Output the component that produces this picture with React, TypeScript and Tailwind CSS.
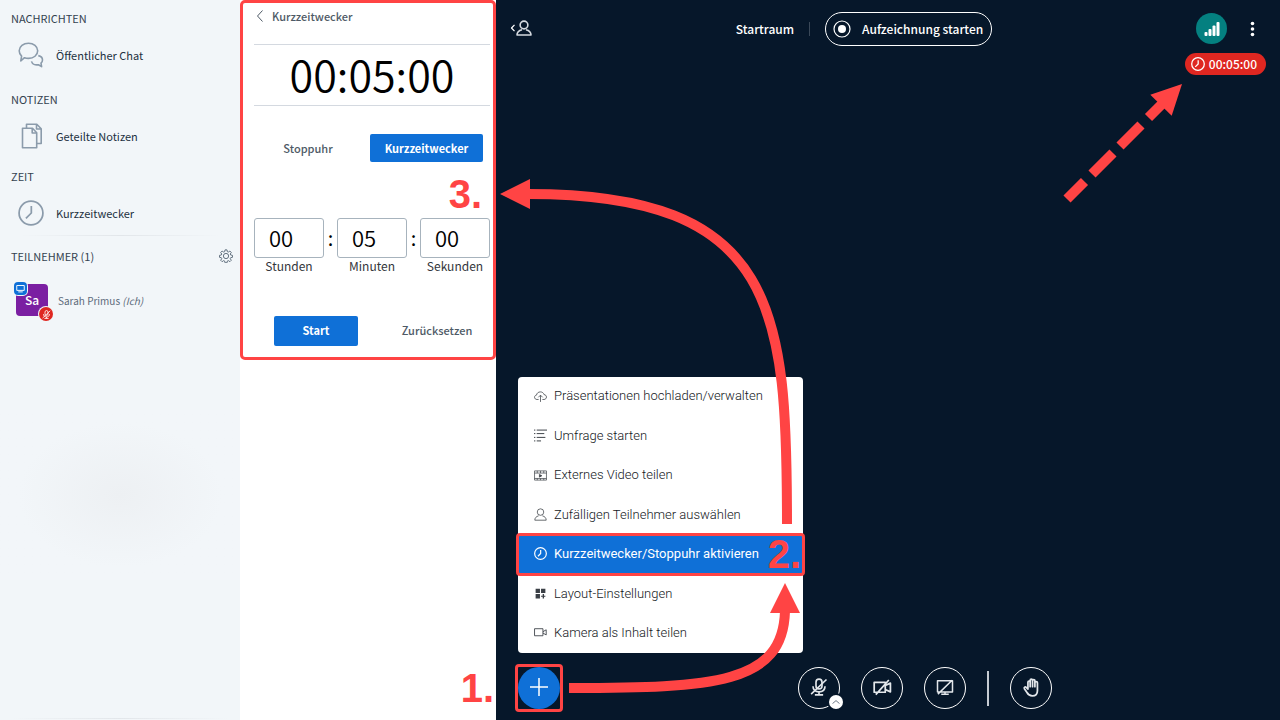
import React, { useState } from "react";

type IconProps = { className?: string };

const ui = "font-['Noto_Sans_CJK_SC','Open_Sans',sans-serif]";

function Svg({
  className,
  children,
  box = "0 0 24 24",
  stroke = "1.6",
}: IconProps & { children: React.ReactNode; box?: string; stroke?: string }) {
  return (
    <svg
      viewBox={box}
      className={className}
      fill="none"
      stroke="currentColor"
      strokeWidth={stroke}
      strokeLinejoin="round"
      aria-hidden="true"
    >
      {children}
    </svg>
  );
}

const ChatIcon = ({ className }: IconProps) => (
  <Svg className={className} box="0 0 26 26">
    <path d="M10.500 1.200c5 0 9.200 3.200 9.200 7.600s-4.100 7.600-9.200 7.600c-1.500 0-2.800-.2-4-.7L2.800 19l.8-4.800C2.100 12.800 1.200 11 1.200 8.800c0-4.400 4.200-7.600 9.300-7.600Z" />
    <path d="M20.300 13.600c2.600.6 4.200 2.300 4.200 4.300 0 1.300-.6 2.400-1.500 3.200l.6 3.500-3.200-1.900c-3.200.6-6.200-.6-6.900-3.300" />
  </Svg>
);

const NotesIcon = ({ className }: IconProps) => (
  <Svg className={className} box="0 0 22 26">
    <path d="M1.500 5.200h10l4.200 4.500v15H1.500Z" />
    <path d="M11.200 5.500v4.500h4.300" />
    <path d="M5.500 5V1.200h10.300l4.400 4.500v14.800h-4.500M15.500 1.500V6h4.500" />
  </Svg>
);

const ClockIcon = ({ className }: IconProps) => (
  <Svg className={className}>
    <circle cx="12" cy="12" r="11" />
    <path d="M12.300 5.500v6.500l-5 5" />
  </Svg>
);

const BoldClockIcon = ({ className }: IconProps) => (
  <Svg className={className} stroke="2.2">
    <circle cx="12" cy="12" r="10.800" />
    <path d="M12.300 5.500v6.500l-5 5" />
  </Svg>
);

const GearIcon = ({ className }: IconProps) => (
  <Svg className={className}>
    <circle cx="12" cy="12" r="4.500" />
    <path d="M10.300 1.500h3.400l.6 3.100 1.700.7 2.700-1.800 2.400 2.400-1.800 2.700.7 1.700 3.100.6v3.400l-3.100.6-.7 1.700 1.800 2.700-2.400 2.400-2.700-1.800-1.700.7-.6 3.100h-3.400l-.6-3.100-1.700-.7-2.700 1.800-2.400-2.400 1.800-2.700-.7-1.700-3.100-.6v-3.400l3.100-.6.7-1.700-1.800-2.700 2.400-2.400L8 5.300l1.700-.7Z" />
  </Svg>
);

const UserIcon = ({ className }: IconProps) => (
  <Svg className={className} stroke="1.4">
    <circle cx="12" cy="7.500" r="6" />
    <path d="M8.500 14.500C4 15.500 1.500 18.500 1.500 22.500h21c0-4-2.500-7-7-8" />
  </Svg>
);

const BoldUserIcon = ({ className }: IconProps) => (
  <Svg className={className} stroke="2.4">
    <circle cx="12" cy="7.500" r="5.800" />
    <path d="M9 14.500c-4.500 1-7.500 3.500-7.500 8h21c0-4.500-3-7-7.500-8" />
  </Svg>
);

const CloudIcon = ({ className }: IconProps) => (
  <Svg className={className} stroke="1.4">
    <path d="M8.500 17.500h-3C3 17.500 1 15.800 1 13.400c0-2.200 1.600-3.800 3.700-4C5 6 8 3.500 11.700 3.500c3.500 0 6 2 6.800 5 2.600.2 4.500 2 4.500 4.500s-2 4.500-4.500 4.500h-3" />
    <path d="M12 22V10M8 13.500l4-4 4 4" />
  </Svg>
);

const PollIcon = ({ className }: IconProps) => (
  <Svg className={className} stroke="1.8">
    <path d="M0 2h2.500M5 2h19M0 8.500h2.500M5 8.500h14M0 15.500h2.500M5 15.500h16M0 22h2.500M5 22h8" />
  </Svg>
);

const FilmIcon = ({ className }: IconProps) => (
  <Svg className={className} stroke="1.3">
    <path d="M1 3.500h22v17H1ZM1 7.500h22M1 17.500h22M6 3.500v4M12 3.500v4M18 3.500v4M6 17.500v3M12 17.500v3M18 17.500v3" />
    <path d="M10 10v5l4.500-2.500Z" fill="currentColor" />
  </Svg>
);

const LayoutIcon = ({ className }: IconProps) => (
  <svg viewBox="0 0 24 24" className={className} fill="currentColor" aria-hidden="true">
    <path d="M3 3h8v8H3ZM13 3h8v8h-8ZM3 13h8v8H3ZM16 13h2.500v3H21v2h-2.500v3H16v-3h-3v-2h3Z" />
  </svg>
);

const CameraIcon = ({ className }: IconProps) => (
  <Svg className={className}>
    <path d="M1 5h15.500v13H1ZM16.500 10.500l6-3.500v9.500l-6-3.500" />
  </Svg>
);

const MicOffIcon = ({ className }: IconProps) => (
  <Svg className={className} stroke="2.2">
    <rect x="8" y="1.500" width="8" height="13" rx="4" />
    <path d="M4 11c0 4.500 3 7.500 8 7.500s8-3 8-7.500M12 18.500V22M6.500 22.500h11M1.500 21.500 22 2" />
  </Svg>
);

const CamOffIcon = ({ className }: IconProps) => (
  <Svg className={className} stroke="2.2">
    <path d="M1.500 5.500h14v12.500h-14ZM15.500 9.500l6.500-3v11l-6.500-3M3.500 21 20 2.500" />
  </Svg>
);

const ScreenOffIcon = ({ className }: IconProps) => (
  <Svg className={className} stroke="2">
    <path d="M2 3.500h20v15H2ZM7 21.500h10M12 18.500v3M2.500 21.500 21.500 3" />
  </Svg>
);

const HandIcon = ({ className }: IconProps) => (
  <Svg className={className} stroke="2.2">
    <path
      strokeLinecap="round"
      d="M7.500 14V5.500c0-2 2.800-2 2.800 0v5.500M10.300 11V3c0-2 3-2 3 0v8M13.300 11V3.500c0-2 3-2 3 0V11M16.300 11V6c0-2 3.200-2 3.200 0v10c0 4.300-2.500 6.500-6.500 6.500-3.500 0-5.200-1.500-6.700-4.200L3 13.500c-.8-1.800 1-2.800 2.300-1.600L7.500 14"
    />
  </Svg>
);

const ScreenIcon = ({ className }: IconProps) => (
  <Svg className={className} stroke="2.5">
    <path d="M2 4h20v13H2ZM6 21h12" />
  </Svg>
);

const menuItems = [
  { label: "Präsentationen hochladen/verwalten", Icon: CloudIcon },
  { label: "Umfrage starten", Icon: PollIcon },
  { label: "Externes Video teilen", Icon: FilmIcon },
  { label: "Zufälligen Teilnehmer auswählen", Icon: UserIcon },
  { label: "Kurzzeitwecker/Stoppuhr aktivieren", Icon: BoldClockIcon, active: true },
  { label: "Layout-Einstellungen", Icon: LayoutIcon },
  { label: "Kamera als Inhalt teilen", Icon: CameraIcon },
];

function Step({ children, className }: { children: string; className: string }) {
  return (
    <span
      className={`pointer-events-none absolute font-['Liberation_Sans',sans-serif] text-[40px] leading-10 font-bold text-[#ff4444] ${className}`}
    >
      {children}
    </span>
  );
}

function NavGroup({ title, children }: { title: string; children: React.ReactNode }) {
  return (
    <section>
      <h2 className="pb-[9px] pl-[11px] text-[11px] leading-4 text-[#344250]">{title}</h2>
      {children}
    </section>
  );
}

function NavItem({ label, Icon, iconClass }: { label: string; Icon: React.FC<IconProps>; iconClass: string }) {
  return (
    <button type="button" className="flex h-10 w-full items-center pl-[18px] text-left text-[11px] text-[#22313f]">
      <span className="flex w-[38px]">
        <Icon className={`text-[#8b9bab] ${iconClass}`} />
      </span>
      {label}
    </button>
  );
}

function Sidebar() {
  return (
    <nav className="flex w-60 shrink-0 flex-col bg-[#f2f6f9] pt-[10px]">
      <div className="flex flex-col gap-3">
        <NavGroup title="NACHRICHTEN">
          <NavItem label="Öffentlicher Chat" Icon={ChatIcon} iconClass="size-[26px]" />
        </NavGroup>
        <div className="pt-1">
          <NavGroup title="NOTIZEN">
            <NavItem label="Geteilte Notizen" Icon={NotesIcon} iconClass="ml-[3px] h-[26px] w-[22px]" />
          </NavGroup>
        </div>
        <NavGroup title="ZEIT">
          <NavItem label="Kurzzeitwecker" Icon={ClockIcon} iconClass="size-[26px]" />
        </NavGroup>
      </div>
      <div className="mx-5 mt-[2px] h-px bg-linear-to-r from-transparent via-[#e2e6ea] to-transparent" />
      <section className="pt-3">
        <div className="flex items-center justify-between pr-[7px] pl-[11px]">
          <h2 className="text-[11px] leading-4 text-[#344250]">TEILNEHMER (1)</h2>
          <button type="button" aria-label="Teilnehmer verwalten" className="text-[#5a6978]">
            <GearIcon className="size-[14px]" />
          </button>
        </div>
        <div className="flex items-center gap-[10px] pt-5 pl-4">
          <div className="relative flex size-8 items-center justify-center rounded-[4px] bg-[#7b1fa2] text-[12px] font-medium text-white">
            Sa
            <span className="absolute -top-[2px] -left-[2px] flex size-[13px] items-center justify-center rounded-[4px] bg-[#0f70d7] text-white ring-1 ring-[#f2f6f9]">
              <ScreenIcon className="size-[9px]" />
            </span>
            <span className="absolute -right-[5px] -bottom-[5px] flex size-[14px] items-center justify-center rounded-full bg-[#df2721] text-white ring-1 ring-[#f2f6f9]">
              <MicOffIcon className="size-[9px]" />
            </span>
          </div>
          <p className="text-[10px] text-[#5d6b7b]">
            Sarah Primus <em>(Ich)</em>
          </p>
        </div>
      </section>
      <div className="mt-[94px] h-[170px] bg-radial from-[#edf0f3] to-[#f2f6f9] to-60%" />
      <div className="mx-3 mt-auto mb-px h-px bg-linear-to-r from-transparent via-[#e2e6ea] to-transparent" />
    </nav>
  );
}

function TimeField({ id, label, initial }: { id: string; label: string; initial: string }) {
  const [value, setValue] = useState(initial);
  return (
    <div className="flex w-[70px] flex-col items-center">
      <input
        id={id}
        inputMode="numeric"
        value={value}
        onChange={(e) => setValue(e.target.value)}
        className="h-10 w-full rounded-[3px] border border-[#a7b3bd] bg-white pb-[3px] pl-[14px] text-[22px] font-[350] text-black"
      />
      <label htmlFor={id} className="text-[12px] leading-4 text-[#33363b]">
        {label}
      </label>
    </div>
  );
}

function TimerPanel() {
  return (
    <aside className="w-64 shrink-0 bg-white">
      <section className="relative rounded-[5px] border-3 border-[#ff4444] pt-[5px] pr-[3px] pb-[11px] pl-[11px]">
        <button type="button" className="flex items-center gap-2 text-[11px] leading-4 font-medium text-[#4e5a66]">
          <Svg className="ml-[2px] h-3 w-2" box="0 0 8 12" stroke="1">
            <path d="M6.500.5 1.500 6l5 5.500" />
          </Svg>
          Kurzzeitwecker
        </button>
        <div className="mt-5 flex h-[62px] items-center justify-center border-y border-[#d4d9e0] pb-1 text-[43px] leading-none font-[350] text-black">
          00:05:00
        </div>
        <div className="mt-7 flex pr-[7px]">
          <button type="button" className="h-7 flex-1 pr-2 text-[11px] font-medium text-[#4e5a66]">
            Stoppuhr
          </button>
          <button type="button" className="h-7 w-[113px] rounded-[2px] bg-[#0f70d7] text-[11px] font-bold text-white">
            Kurzzeitwecker
          </button>
        </div>
        <div className="mt-14 flex justify-between text-black">
          <TimeField id="hours" label="Stunden" initial="00" />
          <span className="text-[20px] leading-10">:</span>
          <TimeField id="minutes" label="Minuten" initial="05" />
          <span className="text-[20px] leading-10">:</span>
          <TimeField id="seconds" label="Sekunden" initial="00" />
        </div>
        <div className="mt-[42px] flex pl-5">
          <button
            type="button"
            className="h-[30px] w-[84px] rounded-[2px] bg-[#0f70d7] pb-[2px] text-[11px] font-bold text-white"
          >
            Start
          </button>
          <button type="button" className="h-[30px] flex-1 pb-[2px] pl-[26px] text-[11px] font-medium text-[#4e5a66]">
            Zurücksetzen
          </button>
        </div>
        <Step className="top-[171px] right-[11px]">3.</Step>
      </section>
    </aside>
  );
}

function TopBar() {
  return (
    <header className="flex h-[34px] items-center justify-between pr-[22px] pl-[14px] text-white">
      <button type="button" aria-label="Teilnehmerliste umschalten" className="flex items-center pb-[2px]">
        <Svg className="h-2 w-[6px]" box="0 0 6 8" stroke="1.2">
          <path d="M4.500.8 1.500 4l3 3.200" />
        </Svg>
        <BoldUserIcon className="size-4 text-[#d5dae0]" />
      </button>
      <div className="flex items-center">
        <h1 className="text-[12px] font-medium">Startraum</h1>
        <span className="mx-[15px] h-[14px] w-px bg-[#3a4858]" />
        <button
          type="button"
          className="flex h-[34px] items-center gap-[11px] rounded-full border border-white pr-2 pl-[7px] text-[12px] font-medium"
        >
          <Svg className="size-[18px]" box="0 0 18 18" stroke="1.2">
            <circle cx="9" cy="9" r="8" />
            <circle cx="9" cy="9" r="4" fill="currentColor" stroke="none" />
          </Svg>
          Aufzeichnung starten
        </button>
      </div>
      <div className="flex items-center gap-[19px] pb-px">
        <button
          type="button"
          aria-label="Verbindungsstatus"
          className="flex size-[31px] items-center justify-center rounded-full bg-[#048080]"
        >
          <svg viewBox="0 0 16 15" className="h-[15px] w-4" fill="currentColor" aria-hidden="true">
            <rect x="0.500" y="11" width="3" height="4" rx="1" />
            <rect x="4.500" y="8" width="3" height="7" rx="1" />
            <rect x="8.500" y="4.500" width="3" height="10.500" rx="1" />
            <rect x="12.500" y="1" width="3" height="14" rx="1" />
          </svg>
        </button>
        <button type="button" aria-label="Optionen">
          <svg viewBox="0 0 12 16" className="h-4 w-3" fill="currentColor" aria-hidden="true">
            <circle cx="6.500" cy="2.500" r="1.800" />
            <circle cx="6.500" cy="8" r="1.800" />
            <circle cx="6.500" cy="13.500" r="1.800" />
          </svg>
        </button>
      </div>
    </header>
  );
}

function ActionsMenu() {
  return (
    <ul className="absolute bottom-[59px] left-[3px] grid h-[276px] w-[285px] grid-rows-7 rounded-[4px] bg-white font-['Roboto',sans-serif] text-[13px] font-light text-[#14181c]">
      {menuItems.map(({ label, Icon, active }) => (
        <li key={label} className="relative">
          <button
            type="button"
            className={`flex h-full w-full items-center gap-[7px] pb-px pl-4 text-left ${
              active
                ? "rounded-[2px] bg-[#0f70d7] font-normal text-white outline-3 -outline-offset-1 outline-[#ff4444]"
                : ""
            }`}
          >
            <Icon className={`size-[13px] shrink-0 ${active ? "" : "text-[#3a3f45]"}`} />
            {label}
          </button>
          {active && <Step className="-top-px right-[2px]">2.</Step>}
        </li>
      ))}
    </ul>
  );
}

function MediaButton({ label, children }: { label: string; children: React.ReactNode }) {
  return (
    <button
      type="button"
      aria-label={label}
      className="flex size-[42px] items-center justify-center rounded-full border border-white pb-[2px] text-[#e3e7eb]"
    >
      {children}
    </button>
  );
}

function BottomBar() {
  return (
    <footer className="flex items-center gap-[7px] pb-2 pl-[19px]">
      <div className="relative">
        <div className="rounded-[4px] border-3 border-[#ff4444]">
          <button
            type="button"
            aria-label="Aktionen"
            className="flex size-[42px] items-center justify-center rounded-full bg-[#0f70d7] pb-[2px] text-white"
          >
            <Svg className="size-[18px]" box="0 0 18 18" stroke="1.5">
              <path d="M9 0v18M0 9h18" />
            </Svg>
          </button>
        </div>
        <ActionsMenu />
        <Step className="top-1 right-[69px]">1.</Step>
      </div>
      <div className="flex flex-1 items-center justify-center gap-[21px]">
        <div className="relative">
          <MediaButton label="Mikrofon aktivieren">
            <MicOffIcon className="size-[18px]" />
          </MediaButton>
          <button
            type="button"
            aria-label="Audiogerät wechseln"
            className="absolute -right-[3px] bottom-0 flex size-[14px] items-center justify-center rounded-full bg-white text-[#5d6b7b] ring-2 ring-[#06172a]"
          >
            <Svg className="h-1 w-2" box="0 0 8 4" stroke="0.9">
              <path d="M.5 3.600 4 .6l3.500 3" />
            </Svg>
          </button>
        </div>
        <MediaButton label="Webcam freigeben">
          <CamOffIcon className="size-[19px]" />
        </MediaButton>
        <MediaButton label="Bildschirm teilen">
          <ScreenOffIcon className="size-[18px]" />
        </MediaButton>
        <span className="h-[35px] w-[2px] bg-[#c5cbd2]" />
        <MediaButton label="Hand heben">
          <HandIcon className="size-[19px]" />
        </MediaButton>
      </div>
    </footer>
  );
}

function Arrows() {
  return (
    <>
      <svg
        viewBox="496 170 320 550"
        className="pointer-events-none absolute bottom-0 left-0 h-[550px] w-80"
        fill="none"
        aria-hidden="true"
      >
        <path d="M569 688C714 688 783 684 785 611" stroke="#ff4444" strokeWidth="10" />
        <path d="M785 583 800 613H770Z" fill="#ff4444" />
        <path d="M787 524C787 310 778 194 528 194" stroke="#ff4444" strokeWidth="10" />
        <path d="M500 194 530 179V209Z" fill="#ff4444" />
      </svg>
      <svg
        viewBox="1060 80 130 125"
        className="pointer-events-none absolute top-20 right-[90px] h-[125px] w-[130px]"
        fill="none"
        aria-hidden="true"
      >
        <path
          d="M1067 199 1084.500 181.500M1092 174 1113 153M1120 146 1141 125M1148.500 117.500 1164 102"
          stroke="#ff4444"
          strokeWidth="10"
        />
        <path d="M1182 84 1150.300 94.700 1171.700 115.700Z" fill="#ff4444" />
      </svg>
    </>
  );
}

export default function App() {
  return (
    <div className={`flex min-h-screen bg-white ${ui}`}>
      <Sidebar />
      <TimerPanel />
      <main className="relative flex min-w-0 flex-1 flex-col bg-[#06172a] pt-3">
        <TopBar />
        <div className="flex justify-end pt-[7px] pr-[14px]">
          <div className="flex h-[22px] items-center gap-1 rounded-full bg-[#df2721] pr-[9px] pl-[6px] text-[12px] font-medium text-white">
            <BoldClockIcon className="size-[14px]" />
            00:05:00
          </div>
        </div>
        <div className="flex-1" />
        <BottomBar />
        <Arrows />
      </main>
    </div>
  );
}
